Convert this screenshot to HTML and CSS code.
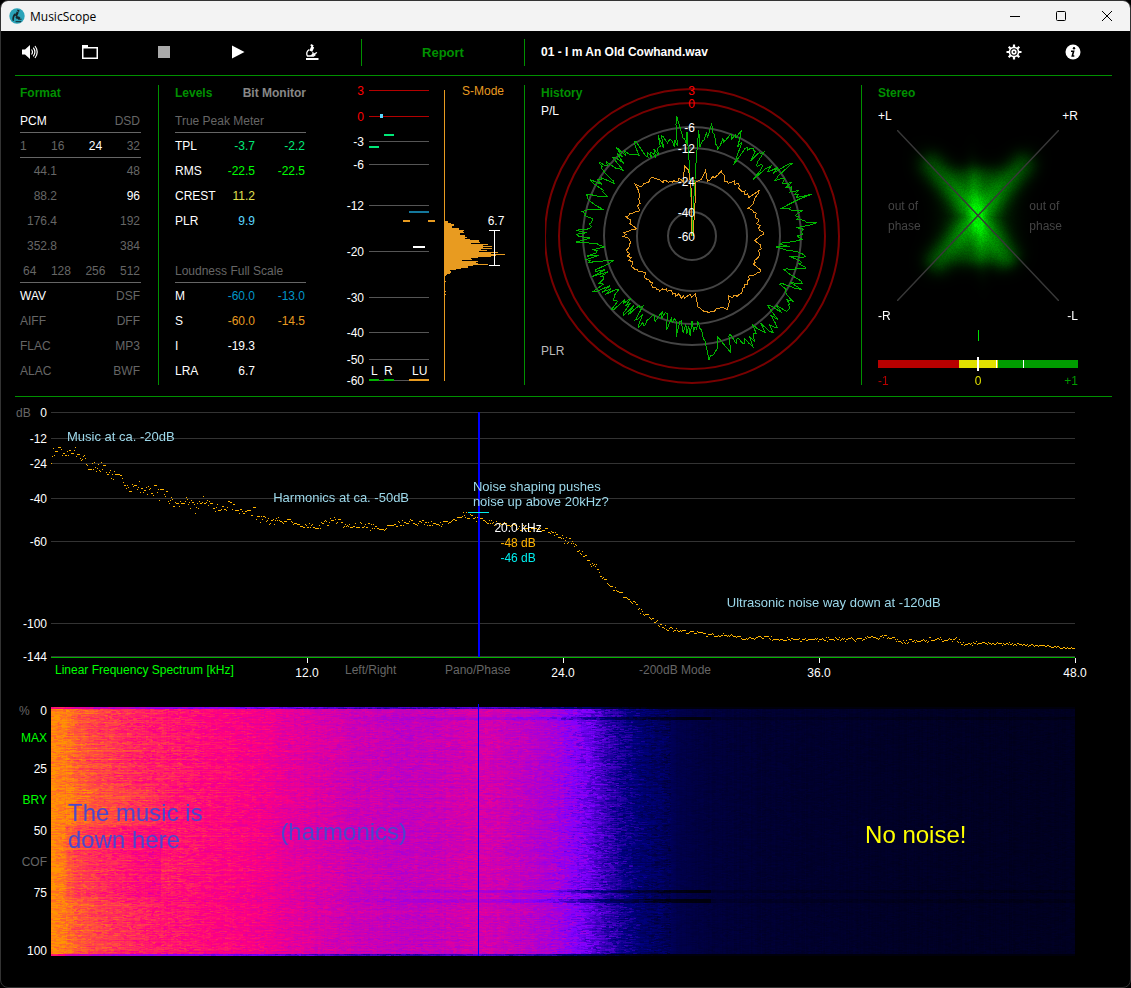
FILE: index.html
```html
<!DOCTYPE html>
<html lang="en">
<head>
  <meta charset="UTF-8">
  <meta name="viewport" content="width=device-width, initial-scale=1.0">
  <title>MusicScope</title>
  <link rel="stylesheet" href="styles.css">
</head>
<body>
  <div class="window">
    <header class="titlebar">
      <svg class="app-icon" width="16" height="16" viewBox="0 0 16 16">
        <circle cx="8" cy="8" r="7.7" fill="#2ba3b8"/>
        <path d="M8.6 1.6l2 .8-.6 1.5-1.9-.8zM7.6 3.6l2.2 1-1.9 4.2-1.6-.7zM6.3 5C4 6.6 3 9 3.4 12.4l1.5.5C4.7 10 5.3 8.2 6.8 7z" fill="#16252b"/>
        <path d="M7.5 8.5l3.3.9-.3 1.3-3.500-.7zM9 11.2h3.6M6.600 13.7h5.6" stroke="#16252b" stroke-width="1" fill="#16252b"/>
      </svg>
      <span class="app-name">MusicScope</span>
      <div class="window-buttons">
        <button aria-label="Minimize"><svg width="12" height="12" viewBox="0 0 12 12"><path d="M1 6.5h10" stroke="#000"/></svg></button>
        <button aria-label="Maximize"><svg width="12" height="12" viewBox="0 0 12 12"><rect x="1.5" y="1.5" width="9" height="9" rx="1" fill="none" stroke="#000"/></svg></button>
        <button aria-label="Close"><svg width="12" height="12" viewBox="0 0 12 12"><path d="M1 1l10 10M11 1L1 11" stroke="#000"/></svg></button>
      </div>
    </header>

    <main>
      <div class="toolbar">
        <button class="tool tool-volume" aria-label="Volume">
          <svg width="16" height="16" viewBox="0 0 16 16"><path d="M0 5.5h3L8 1v14L3 10.5H0z" fill="#fff"/><path d="M9.5 5.5q2 2.5 0 5M11.3 3.7q3.2 4.3 0 8.6M13 2q4.4 6 0 12" fill="none" stroke="#fff" stroke-width="1.2"/></svg>
        </button>
        <button class="tool" aria-label="Open">
          <svg width="16" height="16" viewBox="0 0 16 16"><path d="M0 1h6v2h10v12H0zM1.5 4.5v9h13v-9z" fill="#fff" fill-rule="evenodd"/></svg>
        </button>
        <button class="tool" aria-label="Stop">
          <svg width="16" height="16" viewBox="0 0 16 16"><rect x="2" y="2" width="12" height="12" fill="#aaa"/></svg>
        </button>
        <button class="tool" aria-label="Play">
          <svg width="16" height="16" viewBox="0 0 16 16"><path d="M2 1.5L14.5 8 2 14.5z" fill="#fff"/></svg>
        </button>
        <button class="tool" aria-label="Analyze">
          <svg width="16" height="16" viewBox="0 0 16 16">
            <path d="M7 0l2.600 1.300-.7 1.400 1.300.8-2 4.300-2.800-1.400 1.900-4.200-.9-.5z" fill="#fff"/>
            <path d="M5.300 5.500Q1.500 8 3.300 12M8.500 8.300q1.500 1.500-.5 2.200M6.500 11.800L13 8.500M3 12h6.500l2-1.500" fill="none" stroke="#fff" stroke-width="1.300"/>
            <path d="M2 15h12.500" stroke="#fff" stroke-width="1.800"/>
          </svg>
        </button>
        <button class="report">Report</button>
        <span class="file-name">01 - I m An Old Cowhand.wav</span>
        <button class="tool-side" aria-label="Settings">
          <svg width="16" height="16" viewBox="0 0 16 16">
            <path d="M8 .5v15M.5 8h15M2.700 2.700l10.600 10.600M13.300 2.700L2.700 13.300" stroke="#fff" stroke-width="2.200"/>
            <circle cx="8" cy="8" r="5.400" fill="#fff"/>
            <circle cx="8" cy="8" r="3.200" fill="none" stroke="#000" stroke-width="1.100"/>
            <circle cx="8" cy="8" r="1" fill="#000"/>
          </svg>
        </button>
        <button class="tool-side" aria-label="Info">
          <svg width="16" height="16" viewBox="0 0 16 16">
            <circle cx="8" cy="8" r="7.500" fill="#fff"/>
            <circle cx="9" cy="4.300" r="1.200" fill="#000"/>
            <path d="M6 7.200h2.600L7.300 12h2" fill="none" stroke="#000" stroke-width="1.600"/>
          </svg>
        </button>
      </div>

      <div class="panels">
        <section class="panel format">
          <h2>Format</h2>
          <div class="row ruled"><span class="on">PCM</span><span>DSD</span></div>
          <div class="row ruled"><span>1</span><span>16</span><span class="on">24</span><span>32</span></div>
          <div class="row"><span class="rate">44.1</span><span>48</span></div>
          <div class="row"><span class="rate">88.2</span><span class="on">96</span></div>
          <div class="row"><span class="rate">176.4</span><span>192</span></div>
          <div class="row"><span class="rate">352.8</span><span>384</span></div>
          <div class="row ruled dsd-rates"><span>64</span><span>128</span><span>256</span><span>512</span></div>
          <div class="row"><span class="on">WAV</span><span>DSF</span></div>
          <div class="row"><span>AIFF</span><span>DFF</span></div>
          <div class="row"><span>FLAC</span><span>MP3</span></div>
          <div class="row"><span>ALAC</span><span>BWF</span></div>
        </section>

        <section class="panel levels">
          <div class="tabs">
            <button class="tab active">Levels</button>
            <button class="tab">Bit Monitor</button>
          </div>
          <table>
            <tr class="group"><th colspan="3">True Peak Meter</th></tr>
            <tr><th>TPL</th><td class="mint">-3.7</td><td class="mint">-2.2</td></tr>
            <tr><th>RMS</th><td class="lime">-22.5</td><td class="lime">-22.5</td></tr>
            <tr><th>CREST</th><td class="yellow">11.2</td><td></td></tr>
            <tr><th>PLR</th><td class="sky">9.9</td><td></td></tr>
          </table>
          <table>
            <tr class="group"><th colspan="3">Loudness Full Scale</th></tr>
            <tr><th>M</th><td class="blue">-60.0</td><td class="blue">-13.0</td></tr>
            <tr><th>S</th><td class="orange">-60.0</td><td class="orange">-14.5</td></tr>
            <tr><th>I</th><td>-19.3</td><td></td></tr>
            <tr><th>LRA</th><td>6.7</td><td></td></tr>
          </table>
        </section>

        <section class="panel meters">
          <svg class="meter" width="114" height="300" viewBox="0 0 114 300">
            <g class="scale" id="meterScale"></g>
            <rect x="50" y="29" width="3" height="4" fill="#5bd7ff"/>
            <rect x="54" y="49" width="10" height="2" fill="#00e878"/>
            <rect x="39" y="61" width="10" height="2" fill="#00e878"/>
            <rect x="79" y="126" width="20" height="2" fill="#14789c"/>
            <rect x="73" y="135" width="7" height="2" fill="#e89b20"/>
            <rect x="98" y="135" width="7" height="2" fill="#e89b20"/>
            <rect x="83" y="161" width="12" height="2" fill="#fff"/>
            <rect x="39" y="294" width="10" height="2" fill="#00b400"/>
            <rect x="54" y="294" width="10" height="2" fill="#00b400"/>
            <rect x="79" y="294" width="20" height="2" fill="#e89b20"/>
            <g class="channel">
              <text x="41" y="290">L</text>
              <text x="54" y="290">R</text>
              <text x="82" y="290">LU</text>
            </g>
          </svg>
          <div class="histogram">
            <button class="mode">S-Mode</button>
            <svg width="78" height="200" viewBox="0 0 78 200">
              <g id="histogramBars" fill="#e89b20"></g>
              <path d="M44 131.500h11M44 166.500h11M49.500 132v34" stroke="#fff"/>
              <text x="51" y="126" text-anchor="middle">6.7</text>
            </svg>
          </div>
        </section>

        <section class="panel history">
          <div class="history-side">
            <h2>History</h2>
            <button class="pl">P/L</button>
            <button class="plr">PLR</button>
          </div>
          <svg width="296" height="300" viewBox="0 0 296 300">
            <g fill="none" stroke="#444" stroke-width="2">
              <circle cx="147" cy="151" r="24"/>
              <circle cx="147" cy="151" r="55"/>
              <circle cx="147" cy="151" r="88"/>
              <circle cx="147" cy="151" r="109"/>
              <circle cx="147" cy="151" r="133" stroke="#780000"/>
              <circle cx="147" cy="151" r="147" stroke="#780000"/>
            </g>
            <path class="trace" id="peakTrace" stroke="#00b400"/>
            <path class="trace" id="loudTrace" stroke="#e89b20"/>
            <g text-anchor="end">
              <text class="hot" x="150" y="10">3</text>
              <text class="hot" x="150" y="23">0</text>
              <text x="150" y="47">-6</text>
              <text x="150" y="68">-12</text>
              <text x="150" y="101">-24</text>
              <text x="150" y="132">-40</text>
              <text x="150" y="156">-60</text>
            </g>
          </svg>
        </section>

        <section class="panel stereo">
          <h2>Stereo</h2>
          <div class="corners"><span>+L</span><span>+R</span></div>
          <div class="scope">
            <canvas id="scope" width="162" height="171"></canvas>
            <svg width="162" height="171" viewBox="0 0 162 171"><path d="M0 0l162 171M162 0L0 171" stroke="#383838" stroke-width="1.500"/></svg>
            <div class="phase-notes"><span>out of<br>phase</span><span>out of<br>phase</span></div>
          </div>
          <div class="corners"><span>-R</span><span>-L</span></div>
          <svg class="correlation" width="200" height="42" viewBox="0 0 200 42">
            <rect x="100" width="1" height="11" fill="#00e000"/>
            <rect y="30" width="81" height="8" fill="#b80000"/>
            <rect x="81" y="30" width="39" height="8" fill="#e0e000"/>
            <rect x="120" y="30" width="80" height="8" fill="#009c00"/>
            <rect x="118" y="30" width="1" height="8" fill="#fff"/>
            <rect x="145" y="30" width="1" height="8" fill="#fff"/>
            <rect x="99" y="27" width="2" height="14" fill="#fff"/>
          </svg>
          <div class="correlation-scale"><span>-1</span><span>0</span><span>+1</span></div>
        </section>
      </div>

      <section class="chart-row">
        <svg class="db-scale" width="36" height="260" id="dbScale">
          <text class="dim" x="1" y="5">dB</text>
        </svg>
        <div class="spectrum">
          <div class="plot">
            <svg class="plot-layer" id="gridLayer"></svg>
            <canvas class="plot-layer" id="spectrum"></canvas>
            <span class="cursor"></span>
            <span class="cursor-peak"></span>
            <p class="note note-music">Music at ca. -20dB</p>
            <p class="note note-harmonics">Harmonics at ca. -50dB</p>
            <p class="note note-shaping">Noise shaping pushes<br>noise up above 20kHz?</p>
            <p class="note note-ultrasonic">Ultrasonic noise way down at -120dB</p>
            <div class="readout">
              <span>20.0 kHz</span>
              <span class="amber">-48 dB</span>
              <span class="cyan">-46 dB</span>
            </div>
          </div>
          <div class="axis">
            <svg class="ticks" id="ticks"></svg>
            <div class="axis-buttons">
              <button class="lime">Linear Frequency Spectrum [kHz]</button>
              <button>Left/Right</button>
              <button>Pano/Phase</button>
              <button>-200dB Mode</button>
            </div>
          </div>
        </div>
      </section>

      <section class="chart-row spectrogram-row">
        <div class="percent-scale">
          <div class="percent-top"><span>%</span><span class="on">0</span></div>
          <button class="lime">MAX</button>
          <span class="on">25</span>
          <button class="lime">BRY</button>
          <span class="on">50</span>
          <button>COF</button>
          <span class="on">75</span>
          <span class="on last">100</span>
        </div>
        <div class="spectrogram">
          <canvas id="spectrogram"></canvas>
          <span class="cursor thin"></span>
          <p class="caption caption-music">The music is<br>down here</p>
          <p class="caption caption-harmonics">(harmonics)</p>
          <p class="caption caption-quiet">No noise!</p>
        </div>
      </section>
    </main>
  </div>
  <script src="script.js"></script>
</body>
</html>
```
FILE: styles.css
```css
* {
  box-sizing: border-box;
}
body {
  margin: 0;
  background: #000;
  color: #fff;
  font-family: "Liberation Sans", Arial, sans-serif;
  font-size: 12px;
}
button {
  padding: 0;
  border: 0;
  background: none;
  color: #666;
  font: inherit;
  text-align: left;
  cursor: pointer;
}
h2, p {
  margin: 0;
}
svg, canvas {
  display: block;
}
text {
  fill: #fff;
}
text.hot {
  fill: #f00;
}
text.dim {
  fill: #666;
}
.window {
  min-height: 100vh;
  border: 1px solid #333;
  border-radius: 8px;
  overflow: hidden;
}

/* title bar */
.titlebar {
  display: flex;
  align-items: center;
  height: 30px;
  padding-left: 8px;
  background: #f3f3f3;
  color: #000;
  font-family: "Open Sans", "Noto Sans", sans-serif;
}
.app-name {
  margin-left: 5px;
}
.window-buttons {
  display: flex;
  margin-left: auto;
}
.window-buttons button {
  display: grid;
  place-items: center;
  width: 46px;
  height: 30px;
}

main {
  padding: 0 18px 0 14px;
}

/* toolbar */
.toolbar {
  display: flex;
  align-items: center;
  height: 45px;
  padding: 0 10px 2px 0;
  border-bottom: 1px solid #009000;
}
.tool, .tool-side {
  display: grid;
  place-items: center;
  width: 74px;
  height: 27px;
}
.tool-volume {
  width: 30px;
  margin-right: 8px;
}
.tool-side {
  width: 59px;
}
.report {
  width: 164px;
  height: 27px;
  margin-left: 12px;
  border-left: 1px solid #009000;
  border-right: 1px solid #009000;
  color: #009000;
  font-size: 13px;
  font-weight: bold;
  text-align: center;
}
.file-name {
  flex: 1;
  padding-left: 16px;
  font-weight: bold;
}

/* upper panels */
.panels {
  display: grid;
  grid-template-columns: 144px 171px 195px 337px 1fr;
  padding: 9px 0 11px;
  border-bottom: 1px solid #009000;
}
.panel {
  height: 300px;
}
.format, .meters, .history {
  border-right: 1px solid #009000;
}
h2, .tab {
  color: #009000;
  font-size: 12px;
  font-weight: bold;
  line-height: 16px;
}
.format {
  padding: 0 17px 0 5px;
  color: #666;
}
.format h2 {
  margin-bottom: 7px;
}
.row {
  display: flex;
  justify-content: space-between;
  height: 25px;
  padding-right: 1px;
  line-height: 27px;
}
.ruled {
  border-bottom: 1px solid #666;
}
.rate {
  width: 37px;
  text-align: right;
}
.dsd-rates {
  padding-left: 3px;
}
.on {
  color: #fff;
}

.levels {
  padding: 0 24px 0 16px;
}
.tabs {
  display: flex;
  justify-content: space-between;
  align-items: flex-start;
  height: 23px;
}
.tab:not(.active) {
  color: #888;
}
.levels table {
  width: 100%;
  margin-bottom: 25px;
  border-collapse: collapse;
}
.levels th, .levels td {
  height: 25px;
  padding: 0 1px 0 0;
  font-weight: normal;
  text-align: right;
}
.levels th {
  padding: 0;
  text-align: left;
}
.levels .group th {
  color: #666;
  background: linear-gradient(#666, #666) bottom / 100% 1px no-repeat;
}
.levels td:last-child {
  width: 50px;
}
.mint { color: #00e878; }
.lime, button.lime { color: #00ff00; }
.yellow { color: #e0e050; }
.sky { color: #5bd7ff; }
.blue { color: #0096c8; }
.orange { color: #e89b20; }
.amber { color: #ffb400; }
.cyan { color: #00f0f0; }

.meters {
  display: flex;
}
.histogram {
  width: 78px;
  height: 291px;
  margin-top: 5px;
  border-left: 1px solid #e89b20;
}
.mode {
  display: block;
  height: 16px;
  margin: -7px 0 0 17px;
  color: #e89b20;
  line-height: 16px;
}

.history {
  display: flex;
}
.history-side {
  display: flex;
  flex-direction: column;
  align-items: flex-start;
  width: 20px;
  padding-left: 16px;
}
.pl {
  height: 20px;
  color: #fff;
}
.plr {
  height: 20px;
  margin: auto 0 24px;
  color: #bbb;
}
.trace {
  fill: none;
  shape-rendering: crispEdges;
}

.stereo {
  width: 216px;
  padding-left: 16px;
}
.corners, .correlation-scale {
  display: flex;
  justify-content: space-between;
}
.corners {
  padding: 7px 0 6px;
  line-height: 16px;
}
.scope {
  display: grid;
  justify-items: center;
  align-items: center;
}
.scope > * {
  grid-area: 1 / 1;
}
.phase-notes {
  display: flex;
  justify-content: space-between;
  width: 100%;
  padding: 0 16px 0 10px;
  color: #444;
  line-height: 20px;
}
.scope + .corners {
  padding: 7px 0 6px;
}
.correlation-scale {
  line-height: 18px;
  color: #009c00;
}
.correlation-scale span {
  width: 33%;
}
.correlation-scale span:first-child {
  color: #b80000;
}
.correlation-scale span:nth-child(2) {
  color: #e0e000;
  text-align: center;
}
.correlation-scale span:last-child {
  text-align: right;
}

/* frequency spectrum */
.chart-row {
  display: flex;
  padding: 15px 37px 0 0;
}
.db-scale, .ticks {
  overflow: visible;
}
.spectrum, .spectrogram {
  flex: 1;
  min-width: 0;
}
.plot {
  position: relative;
  height: 246px;
  border-bottom: 1px solid #00b400;
}
.plot-layer {
  position: absolute;
  inset: 0;
  width: 100%;
  height: 245px;
}
.cursor {
  position: absolute;
  top: 0;
  bottom: 0;
  left: 41.7%;
  width: 2px;
  background: #0000ff;
}
.cursor.thin {
  top: -3px;
  width: 1px;
}
.cursor-peak {
  position: absolute;
  top: 100px;
  left: 40.7%;
  width: 21px;
  height: 1px;
  background: #00f0f0;
}
.note {
  position: absolute;
  color: #9cd8ea;
  font-size: 13px;
  line-height: 15px;
  white-space: nowrap;
}
.note-music {
  top: 17px;
  left: 16px;
}
.note-harmonics {
  top: 78px;
  left: 21.7%;
}
.note-shaping {
  top: 67px;
  left: 41.2%;
}
.note-ultrasonic {
  top: 183px;
  left: 66%;
}
.readout {
  position: absolute;
  top: 109px;
  left: 43.3%;
  display: grid;
  line-height: 15px;
  text-align: center;
}
.axis {
  display: grid;
  height: 27px;
}
.axis > * {
  grid-area: 1 / 1;
}
.ticks {
  width: 100%;
  height: 27px;
}
.axis-buttons {
  display: grid;
  grid-template-columns: 290px 100px 194px auto;
  justify-content: start;
  padding-left: 4px;
  height: 24px;
}

/* spectrogram */
.spectrogram-row {
  padding-top: 14px;
}
.percent-scale {
  display: flex;
  flex-direction: column;
  width: 36px;
  height: 264px;
  padding-right: 4px;
  color: #666;
  line-height: 31px;
  text-align: right;
}
.percent-scale button {
  height: 31px;
  text-align: right;
}
.percent-top {
  display: flex;
  justify-content: space-between;
  padding-left: 4px;
  line-height: 24px;
}
.percent-scale .last {
  margin-top: auto;
  line-height: 24px;
}
.spectrogram {
  position: relative;
  height: 249px;
  margin-top: 8px;
}
.spectrogram canvas {
  width: 100%;
  height: 249px;
}
.caption {
  position: absolute;
  color: #4848cc;
  font-size: 24px;
  line-height: 27px;
  white-space: nowrap;
}
.caption-music {
  top: 92px;
  left: 17px;
}
.caption-harmonics {
  top: 111px;
  left: 22.4%;
}
.caption-quiet {
  top: 114px;
  left: 79.5%;
  color: #ffff00;
}
```
FILE: script.js
```js
const SVG_NS = 'http://www.w3.org/2000/svg';

let seed = 20240;
function random() {
  seed = (seed * 1664525 + 1013904223) % 4294967296;
  return seed / 4294967296;
}

function addSvg(parent, tag, attrs, text) {
  const el = document.createElementNS(SVG_NS, tag);
  for (const key in attrs) el.setAttribute(key, attrs[key]);
  if (text !== undefined) el.textContent = text;
  parent.appendChild(el);
}

// linear interpolation over [x, y] pairs
function lookup(points, x) {
  for (let i = 1; i < points.length; i++) {
    if (x <= points[i][0]) {
      const [x0, y0] = points[i - 1];
      const [x1, y1] = points[i];
      return y0 + (y1 - y0) * Math.max(0, x - x0) / (x1 - x0);
    }
  }
  return points[points.length - 1][1];
}

function drawMeterScale() {
  const scale = document.getElementById('meterScale');
  const marks = [[3, 5], [0, 31], [-3, 56], [-6, 79], [-12, 120], [-20, 166], [-30, 212], [-40, 247], [-50, 274], [-60, 295]];
  marks.forEach(([db, y]) => {
    const hot = db >= 0;
    addSvg(scale, 'rect', { x: 39, y, width: 60, height: 1, fill: hot ? '#b40000' : '#555' });
    addSvg(scale, 'text', { x: 34, y: y + 5, 'text-anchor': 'end', class: hot ? 'hot' : '' }, db);
  });
}

function drawHistogram() {
  const bars = document.getElementById('histogramBars');
  const widths = [
    3, 3, 6, 9, 9, 7, 7, 14, 14, 19, 18, 19, 15, 15, 20, 20, 22, 20, 25, 34, 34, 35, 26, 43, 38, 47, 38, 47,
    36, 42, 34, 53, 46, 60, 51, 46, 33, 26, 27, 17, 33, 31, 33, 43, 28, 23, 23, 16, 11, 5, 6, 6, 5, 2, 1
  ];
  widths.forEach((width, i) => addSvg(bars, 'rect', { x: 0, y: 122 + i, width, height: 1 }));
  [182, 192, 195, 210].forEach(y => addSvg(bars, 'rect', { x: 0, y, width: 1, height: 1 }));
}

// closed history traces, offsets from the dial centre in thirds of a pixel
const PEAK = [
  [0, 0], [6, -120], [13, -232], [20, -317], [26, -290], [34, -305], [45, -285], [60, -345], [62, -285], [72, -300], [82, -262],
  [95, -300], [105, -280], [137, -322], [140, -285], [150, -282], [133, -227], [165, -265], [180, -240], [215, -250], [197, -182], [235, -215],
  [250, -200], [288, -209], [262, -175], [290, -150], [335, -117], [305, -105], [268, -82], [320, -75], [322, -45], [361, -39], [318, -25], [325, 5],
  [268, 40], [338, 50], [310, 70], [325, 95], [300, 110], [320, 145], [270, 160], [293, 183], [285, 205], [240, 220], [255, 248],
  [215, 283], [181, 275], [178, 311], [163, 331], [113, 308], [103, 345], [88, 323], [48, 348], [36, 328], [28, 275], [0, 270],
  [-20, 285], [-30, 270], [-45, 285], [-70, 260], [-87, 248], [-125, 235], [-147, 278], [-162, 223], [-190, 235], [-200, 190], [-237, 223], [-220, 180],
  [-282, 153], [-255, 130], [-285, 105], [-252, 78], [-307, 83], [-272, 23], [-327, 23], [-325, -27], [-277, -37], [-325, -62], [-272, -87],
  [-322, -127], [-249, -117], [-302, -167], [-245, -165], [-272, -222], [-220, -210], [-222, -252], [-177, -242], [-167, -282], [-145, -250],
  [-125, -265], [-107, -232], [-87, -300], [-70, -265], [-47, -290], [-44, -345], [-30, -290], [-17, -277], [-15, -312], [-8, -215], [0, -60], [0, 0]
];
const LOUD = [
  [3, 0], [8, -80], [12, -162], [28, -167], [40, -192], [48, -169], [68, -177], [90, -199], [98, -162], [125, -162], [153, -137],
  [173, -117], [198, -134], [185, -97], [168, -82], [188, -67], [198, -37], [213, -5], [193, 13], [205, 38], [193, 68], [181, 83],
  [205, 101], [173, 123], [148, 173], [113, 185], [111, 213], [73, 223], [43, 230], [18, 213], [10, 178], [-37, 183], [-67, 163],
  [-107, 161], [-137, 123], [-142, 105], [-175, 101], [-197, 43], [-182, 23], [-209, -10], [-169, -22], [-197, -57], [-162, -77],
  [-157, -117], [-167, -152], [-147, -149], [-117, -175], [-87, -162], [-27, -167], [-22, -209], [-10, -197], [-2, -137], [0, 0]
];

function drawTrace(id, points, jitter, step) {
  let d = '';
  for (let i = 1; i < points.length; i++) {
    const [x0, y0] = points[i - 1];
    const [x1, y1] = points[i];
    const calm = Math.abs(x0) < 24 && y0 < 0 || i < 3;
    const turn = Math.abs(Math.atan2(x0 * y1 - y0 * x1, x0 * x1 + y0 * y1));
    const count = calm ? 1 : Math.max(1, Math.round(turn * 300 / step));
    for (let k = 0; k < count; k++) {
      const x = x0 + (x1 - x0) * k / count;
      const y = y0 + (y1 - y0) * k / count;
      // push the sample in or out along its radius
      const r = Math.hypot(x, y) || 1;
      const push = calm ? 0 : (random() - 0.5) * 2 * jitter / r;
      d += (d ? 'L' : 'M') + (147 + x * (1 + push) / 3).toFixed(1) + ' ' + (151 + y * (1 + push) / 3).toFixed(1);
    }
  }
  document.getElementById(id).setAttribute('d', d + 'L147 151');
}

function drawScope() {
  const canvas = document.getElementById('scope');
  const ctx = canvas.getContext('2d');
  const { width, height } = canvas;
  const image = ctx.createImageData(width, height);
  const arms = [[-52, -58], [51, -58], [-46, 51], [34, 48]];
  for (let y = 0; y < height; y++) {
    for (let x = 0; x < width; x++) {
      const dx = x - 80;
      const dy = y - 86;
      const cap = 1 / (1 + Math.exp((Math.abs(dy) - 47) / 4));
      let v = 0.34 * Math.exp(-(dx * dx) / 700) * cap;
      v += 0.36 * Math.exp(-Math.pow(dx - dy * 0.08, 2) / 50 - (dy * dy) / 1300);
      let arm = 0;
      arms.forEach(([ax, ay]) => {
        const len = Math.hypot(ax, ay);
        const t = (dx * ax + dy * ay) / (len * len);
        const side = Math.abs(dx * ay - dy * ax) / len;
        const fade = 1 / (1 + Math.exp((t - 1) * 16));
        arm = Math.max(arm, t < 0 ? 0 : (0.34 - 0.04 * t) * Math.exp(-(side * side) / 170) * fade);
      });
      v = Math.min(0.93, v + arm);
      v *= 0.92 + random() * 0.16;
      const i = (y * width + x) * 4;
      image.data[i + 1] = v * 255;
      image.data[i + 3] = 255;
    }
  }
  ctx.putImageData(image, 0, 0);
}

const GRID = [[0, 0], [-12, 26], [-24, 51], [-40, 86], [-60, 129], [-100, 211], [-144, 244]];

function drawGrid() {
  const grid = document.getElementById('gridLayer');
  const scale = document.getElementById('dbScale');
  GRID.forEach(([db, y]) => {
    addSvg(grid, 'rect', { x: 0, y, width: '100%', height: 1, fill: '#333' });
    addSvg(scale, 'text', { x: 32, y: y + 5, 'text-anchor': 'end' }, db);
  });
  const ticks = document.getElementById('ticks');
  [12, 24, 36, 48].forEach(khz => {
    const x = khz / 48 * 100 + '%';
    addSvg(ticks, 'rect', { x, y: 0, width: 1, height: 5, fill: '#fff' });
    addSvg(ticks, 'text', { x, y: 19, 'text-anchor': 'middle' }, khz.toFixed(1));
  });
}

// average level, plot x (0-1024) against plot y
const SPECTRUM = [
  [0, 48], [2, 40], [15, 42], [25, 40], [28, 47], [35, 46], [40, 56], [53, 55], [58, 63], [67, 61], [72, 68], [81, 75], [92, 74],
  [106, 81], [119, 88], [131, 92], [135, 88], [144, 96], [152, 86], [160, 96], [170, 94], [181, 94], [192, 100], [199, 98], [208, 105],
  [224, 109], [240, 109], [249, 113], [265, 115], [281, 107], [292, 111], [299, 115], [310, 113], [331, 117], [347, 111], [360, 109],
  [377, 111], [395, 112], [404, 105], [413, 103], [428, 107], [440, 110], [454, 110], [467, 116], [488, 117], [501, 121], [509, 124],
  [513, 127], [522, 131], [531, 141], [538, 152], [545, 154], [551, 166], [562, 178], [565, 177], [578, 188], [585, 191], [589, 199],
  [600, 206], [611, 214], [622, 217], [655, 222], [684, 224], [695, 226], [713, 225], [727, 227], [764, 227], [786, 227], [797, 226],
  [811, 227], [816, 225], [829, 226], [834, 222], [840, 227], [851, 230], [884, 227], [902, 227], [913, 231], [942, 231], [970, 232],
  [1019, 236], [1024, 236]
];
const SPREAD = [[0, 8], [90, 9], [200, 6], [260, 4], [520, 4], [620, 3], [660, 2], [900, 3], [1024, 1]];

function drawSpectrum() {
  const canvas = document.getElementById('spectrum');
  canvas.width = canvas.clientWidth;
  canvas.height = 245;
  const ctx = canvas.getContext('2d');
  ctx.fillStyle = '#ffb400';
  let y = 0;
  for (let x = 0; x < canvas.width; x++) {
    const px = x / canvas.width * 1024;
    if (x === 0 || random() < 0.75) {
      const spread = lookup(SPREAD, px);
      y = Math.round(lookup(SPECTRUM, px) + (random() + random() - 1) * spread);
    }
    ctx.fillRect(x, y, 1, 1);
  }
}

const HEAT = [[0, [0, 0, 12]], [0.1, [0, 0, 44]], [0.3, [0, 0, 128]], [0.5, [128, 0, 255]], [0.75, [255, 0, 128]], [1, [255, 150, 0]]];
const LEVELS = [
  [0, 0.98], [12, 0.96], [25, 0.9], [50, 0.85], [90, 0.8], [150, 0.765], [200, 0.735], [250, 0.69], [300, 0.655], [350, 0.63], [400, 0.65],
  [430, 0.67], [470, 0.63], [505, 0.57], [525, 0.51], [545, 0.43], [570, 0.33], [600, 0.23], [640, 0.15], [700, 0.115], [850, 0.08], [1024, 0.06]
];

function heat(v) {
  for (let i = 1; i < HEAT.length; i++) {
    if (v <= HEAT[i][0] || i === HEAT.length - 1) {
      const t = Math.min(1, Math.max(0, (v - HEAT[i - 1][0]) / (HEAT[i][0] - HEAT[i - 1][0])));
      return HEAT[i - 1][1].map((c, k) => c + (HEAT[i][1][k] - c) * t);
    }
  }
}

function drawSpectrogram() {
  const canvas = document.getElementById('spectrogram');
  const width = canvas.width = canvas.clientWidth;
  const height = canvas.height = 249;
  const ctx = canvas.getContext('2d');
  const image = ctx.createImageData(width, height);
  const base = [];
  for (let x = 0; x < width; x++) {
    base.push(lookup(LEVELS, x / width * 1024) + (random() - 0.5) * 0.02);
  }
  for (let y = 0; y < height; y++) {
    const edge = y < 2 || y > 246;
    const quiet = y >= 10 && y <= 12 || y >= 183 && y <= 185 || y >= 192 && y <= 195;
    const rowShift = (random() - 0.5) * 0.03;
    const streak = random() < 0.2 ? 0.04 : 0;
    let hold = 0;
    let noise = 0;
    for (let x = 0; x < width; x++) {
      if (hold-- <= 0) {
        hold = 1 + Math.floor(random() * 4);
        noise = random() + random() - 1;
      }
      const px = x / width * 1024;
      const swing = px < 150 ? 0.07 : px < 500 ? 0.055 : px < 620 ? 0.08 : 0.02;
      let v = base[x] + noise * swing + (px < 620 ? rowShift : 0);
      if (px > 14 && px < 240) v += streak * (1 - px / 300);
      if (y > 76 && y < 119 && px > 14 && px < 105) v += 0.025;
      if (y > 119 && y < 190 && px > 14 && px < 110) v -= 0.04;
      if (quiet) v -= px < 14 ? 0 : px < 280 ? 0.01 : px < 660 ? 0.01 + (px - 280) / 380 * 0.15 : 0.03;
      if (edge) v -= px < 14 ? 0.2 : 0.25;
      const [r, g, b] = heat(v);
      const i = (y * width + x) * 4;
      image.data[i] = r;
      image.data[i + 1] = g;
      image.data[i + 2] = b;
      image.data[i + 3] = 255;
    }
  }
  ctx.putImageData(image, 0, 0);
}

drawMeterScale();
drawHistogram();
drawTrace('peakTrace', PEAK, 26, 5);
drawTrace('loudTrace', LOUD, 6, 9);
drawScope();
drawGrid();
drawSpectrum();
drawSpectrogram();
window.addEventListener('resize', () => {
  drawSpectrum();
  drawSpectrogram();
});
```
